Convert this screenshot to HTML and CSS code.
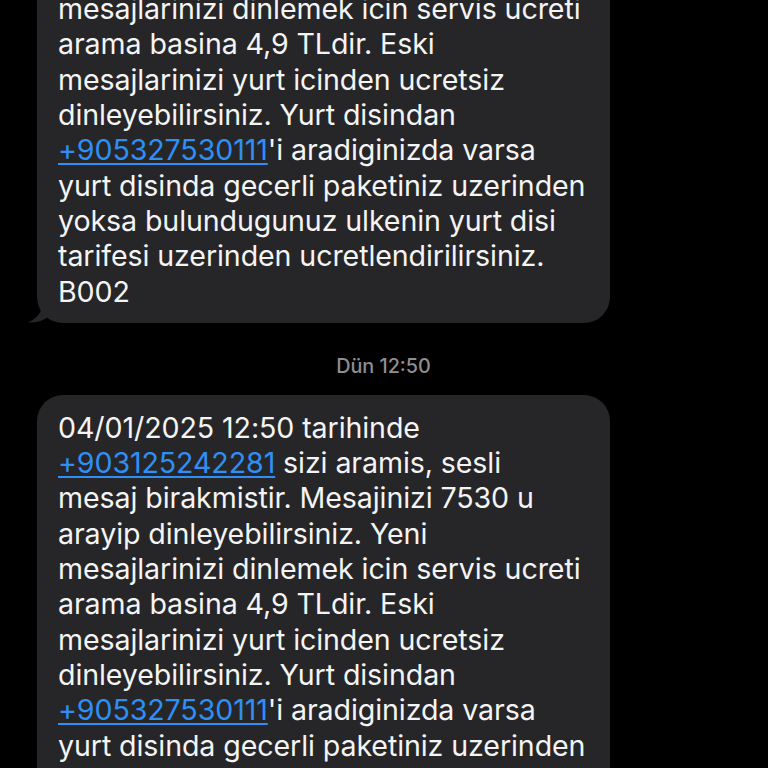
FILE: index.html
```html
<!DOCTYPE html>
<html lang="tr">
<head>
<meta charset="utf-8">
<link rel="stylesheet" href="styles.css">
</head>
<body>
<div class="chat">
  <div class="bubble tailed">
    <span class="ln">04/01/2025 12:50 tarihinde</span>
    <span class="ln"><a class="link">+903125242281</a> sizi aramis, sesli</span>
    <span class="ln">mesaj birakmistir. Mesajinizi 7530 u</span>
    <span class="ln">arayip dinleyebilirsiniz. Yeni</span>
    <span class="ln">mesajlarinizi dinlemek icin servis ucreti</span>
    <span class="ln">arama basina 4,9 TLdir. Eski</span>
    <span class="ln">mesajlarinizi yurt icinden ucretsiz</span>
    <span class="ln">dinleyebilirsiniz. Yurt disindan</span>
    <span class="ln"><a class="link">+905327530111</a>'i aradiginizda varsa</span>
    <span class="ln">yurt disinda gecerli paketiniz uzerinden</span>
    <span class="ln">yoksa bulundugunuz ulkenin yurt disi</span>
    <span class="ln">tarifesi uzerinden ucretlendirilirsiniz.</span>
    <span class="ln">B002</span>
    <svg class="tail" width="24" height="20" viewBox="0 0 24 20"><path d="M14 0 C14 9 10 15 0 19.5 C8 20 14 18 20 14 L24 14 L24 0 Z" fill="#262628"/></svg>
  </div>
  <div class="stamp">Dün 12:50</div>
  <div class="bubble">
    <span class="ln">04/01/2025 12:50 tarihinde</span>
    <span class="ln"><a class="link">+903125242281</a> sizi aramis, sesli</span>
    <span class="ln">mesaj birakmistir. Mesajinizi 7530 u</span>
    <span class="ln">arayip dinleyebilirsiniz. Yeni</span>
    <span class="ln">mesajlarinizi dinlemek icin servis ucreti</span>
    <span class="ln">arama basina 4,9 TLdir. Eski</span>
    <span class="ln">mesajlarinizi yurt icinden ucretsiz</span>
    <span class="ln">dinleyebilirsiniz. Yurt disindan</span>
    <span class="ln"><a class="link">+905327530111</a>'i aradiginizda varsa</span>
    <span class="ln">yurt disinda gecerli paketiniz uzerinden</span>
    <span class="ln">yoksa bulundugunuz ulkenin yurt disi</span>
    <span class="ln">tarifesi uzerinden ucretlendirilirsiniz.</span>
    <span class="ln">B002</span>
  </div>
</div>
</body>
</html>
```
FILE: styles.css
```css
html, body {
  margin: 0;
  padding: 0;
  background: #000;
  overflow: hidden;
  height: 768px;
}
.chat {
  margin-top: -165px;
  padding-left: 37px;
  display: flex;
  flex-direction: column;
  align-items: flex-start;
}
.bubble {
  position: relative;
  width: 573px;
  box-sizing: border-box;
  background: #262628;
  border-radius: 26px;
  padding: 15px 10px 14px 21px;
  font-family: Inter, "Noto Sans", sans-serif;
  font-size: 28.6px;
  line-height: 35.3px;
  color: #f4f4f4;
  letter-spacing: -0.1px;
}
.ln {
  display: block;
  white-space: nowrap;
}
.link {
  color: #2f8ff5;
  text-decoration: underline;
  text-decoration-thickness: 1.5px;
  text-underline-offset: 3px;
}
.tail {
  position: absolute;
  left: -9px;
  bottom: 0;
}
.stamp {
  width: 693px;
  text-align: center;
  font-family: Inter, "Noto Sans", sans-serif;
  font-size: 19.8px;
  font-weight: 500;
  color: #8e8e93;
  height: 72px;
  line-height: 86px;
}
```
